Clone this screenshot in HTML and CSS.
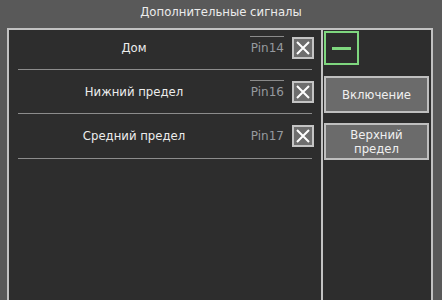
FILE: index.html
```html
<!DOCTYPE html>
<html lang="ru">
<head>
    <meta charset="UTF-8">
    <meta name="viewport" content="width=device-width, initial-scale=1.0">
    <title>Дополнительные сигналы</title>
    <link rel="stylesheet" href="styles.css">
</head>
<body>
    <div class="judul">Дополнительные сигналы</div>
    <div class="panel">
        <div class="daftar">
            <div class="item">
                <div class="baris pertama">
                    <span class="nama">Дом</span>
                    <span class="pin terpasang">Pin14</span>
                    <button class="hapus"><svg width="14" height="14" viewBox="0 0 14 14"><path d="M1 1L13 13M13 1L1 13" stroke="#fff" stroke-width="2"/></svg></button>
                </div>
                <div class="garis"></div>
            </div>
            <div class="item">
                <div class="baris">
                    <span class="nama">Нижний предел</span>
                    <span class="pin terpasang">Pin16</span>
                    <button class="hapus"><svg width="14" height="14" viewBox="0 0 14 14"><path d="M1 1L13 13M13 1L1 13" stroke="#fff" stroke-width="2"/></svg></button>
                </div>
                <div class="garis"></div>
            </div>
            <div class="item">
                <div class="baris ketiga">
                    <span class="nama">Средний предел</span>
                    <span class="pin">Pin17</span>
                    <button class="hapus"><svg width="14" height="14" viewBox="0 0 14 14"><path d="M1 1L13 13M13 1L1 13" stroke="#fff" stroke-width="2"/></svg></button>
                </div>
                <div class="garis"></div>
            </div>
        </div>
        <div class="samping">
            <button class="kurang"><span class="minus"></span></button>
            <button class="tombol">Включение</button>
            <button class="tombol">Верхний<br>предел</button>
        </div>
    </div>
</body>
</html>
```

FILE: styles.css
```css
body {
    margin: 0;
    background-color: #595959;
    font-family: "DejaVu Sans", sans-serif;
    font-size: 11.7px;
    color: #ececec;
    overflow: hidden;
    height: 300px;
}

.judul {
    height: 28px;
    line-height: 24px;
    text-align: center;
}

.panel {
    display: flex;
    margin: 0 9px 0 7px;
    height: 272px;
    border: 2px solid #c2c2c2;
    border-bottom: none;
    background-color: #2d2d2d;
}

.daftar {
    flex: 1;
}

.item {
    margin: 0 7px 0 9px;
}

.baris {
    display: flex;
    align-items: center;
    height: 43px;
}

.baris.pertama {
    height: 36px;
    padding-bottom: 3px;
}

.baris.ketiga {
    height: 44px;
}

.garis {
    height: 1px;
    margin-right: 2px;
    background-color: #8c8c8c;
}

.nama {
    flex: 1;
    text-align: center;
}

.pin {
    color: #969a9f;
    font-size: 12px;
    padding-top: 4px;
    margin-top: -5px;
    border-top: 1px solid transparent;
    width: 34px;
    margin-right: 8px;
    text-align: right;
}

.pin.terpasang {
    border-top-color: #8a8a8a;
}

.hapus {
    width: 22px;
    height: 22px;
    padding: 0;
    border: 2px solid #c4c4c4;
    background-color: #6e6e6e;
    display: flex;
    align-items: center;
    justify-content: center;
}

.samping {
    width: 105px;
    border-left: 2px solid #c2c2c2;
    padding: 1px 2px 0 1px;
    display: flex;
    flex-direction: column;
}

.kurang {
    width: 35px;
    height: 34px;
    padding: 0;
    border: 2px solid #7fd77f;
    background-color: #2d2d2d;
    display: flex;
    align-items: center;
    justify-content: center;
}

.minus {
    width: 19px;
    height: 3px;
    background-color: #7fd77f;
}

.tombol {
    height: 37px;
    margin-top: 11px;
    padding: 0;
    border: 2px solid #bfbfbf;
    background-color: #6b6b6b;
    color: #f0f0f0;
    font-family: "DejaVu Sans", sans-serif;
    font-size: 11.7px;
    line-height: 14px;
}

.tombol + .tombol {
    margin-top: 10px;
}
```
